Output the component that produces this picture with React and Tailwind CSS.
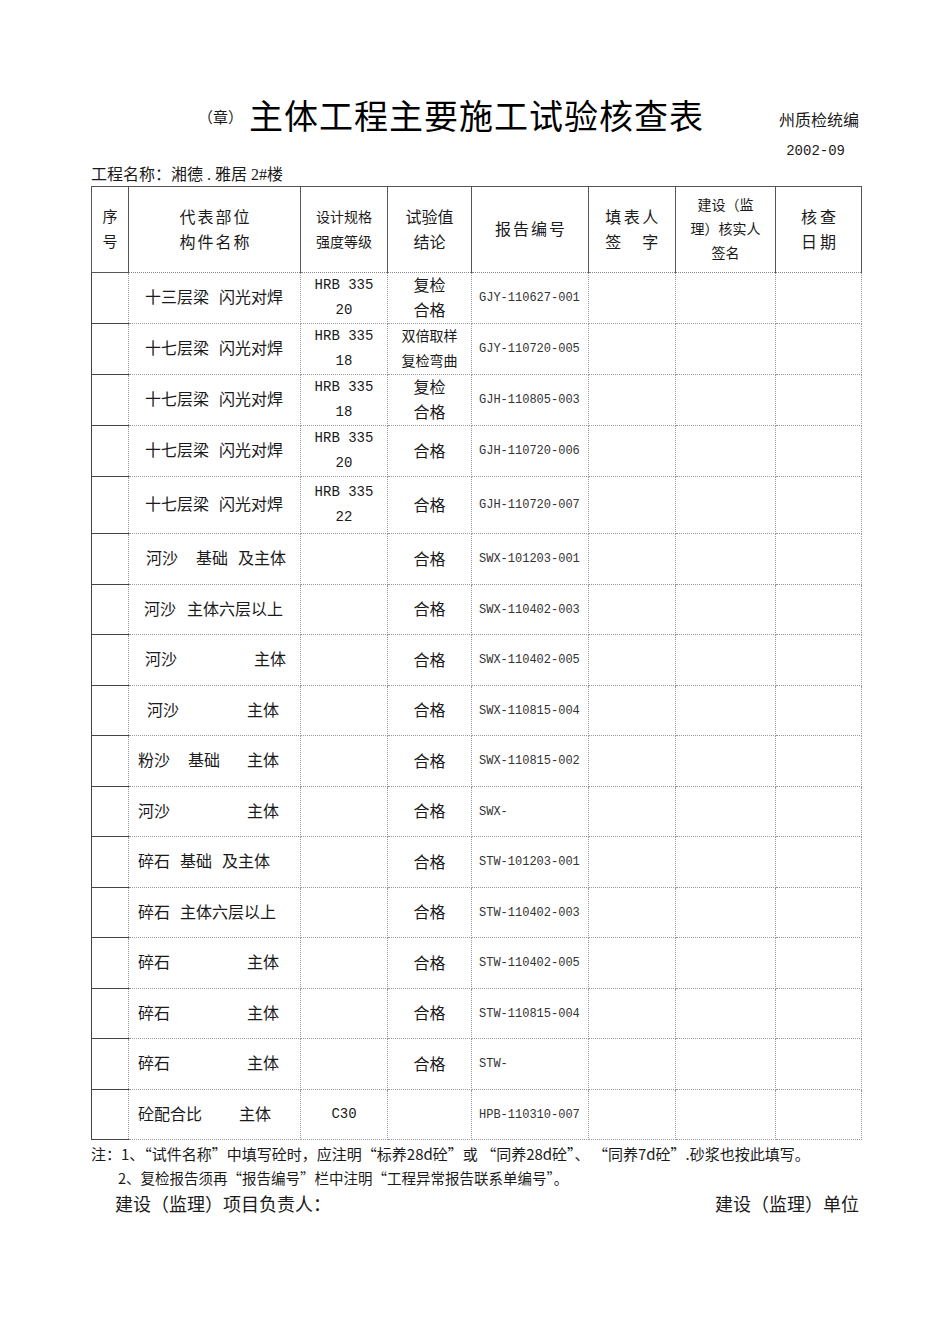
import React from 'react';

// 字体
const CN = "font-['Liberation_Serif','Noto_Sans_CJK_SC',serif]";
const CN_FIRST = "font-['Noto_Sans_CJK_SC','Liberation_Serif',sans-serif]";
const MONO = "font-['Liberation_Mono','Noto_Sans_CJK_SC',monospace]";

// 表格数据
const rows = [
  { h: 'h-[51px]', name: [['十三层梁', 'ml-[16px]'], ['闪光对焊', 'ml-[10px]']], spec: ['HRB 335', '20'], result: ['复检', '合格'], no: 'GJY-110627-001' },
  { h: 'h-[51px]', name: [['十七层梁', 'ml-[16px]'], ['闪光对焊', 'ml-[10px]']], spec: ['HRB 335', '18'], result: ['双倍取样', '复检弯曲'], small: true, no: 'GJY-110720-005' },
  { h: 'h-[51px]', name: [['十七层梁', 'ml-[16px]'], ['闪光对焊', 'ml-[10px]']], spec: ['HRB 335', '18'], result: ['复检', '合格'], no: 'GJH-110805-003' },
  { h: 'h-[51px]', name: [['十七层梁', 'ml-[16px]'], ['闪光对焊', 'ml-[10px]']], spec: ['HRB 335', '20'], result: ['合格'], no: 'GJH-110720-006' },
  { h: 'h-[57px]', name: [['十七层梁', 'ml-[16px]'], ['闪光对焊', 'ml-[10px]']], spec: ['HRB 335', '22'], result: ['合格'], no: 'GJH-110720-007' },
  { h: 'h-[51px]', name: [['河沙', 'ml-[17px]'], ['基础', 'ml-[18px]'], ['及主体', 'ml-[10px]']], spec: [], result: ['合格'], no: 'SWX-101203-001' },
  { h: 'h-[50px]', name: [['河沙', 'ml-[15px]'], ['主体六层以上', 'ml-[11px]']], spec: [], result: ['合格'], no: 'SWX-110402-003' },
  { h: 'h-[51px]', name: [['河沙', 'ml-[16px]'], ['主体', 'ml-[77px]']], spec: [], result: ['合格'], no: 'SWX-110402-005' },
  { h: 'h-[50px]', name: [['河沙', 'ml-[18px]'], ['主体', 'ml-[68px]']], spec: [], result: ['合格'], no: 'SWX-110815-004' },
  { h: 'h-[51px]', name: [['粉沙', 'ml-[9px]'], ['基础', 'ml-[18px]'], ['主体', 'ml-[27px]']], spec: [], result: ['合格'], no: 'SWX-110815-002' },
  { h: 'h-[50px]', name: [['河沙', 'ml-[9px]'], ['主体', 'ml-[77px]']], spec: [], result: ['合格'], no: 'SWX-' },
  { h: 'h-[51px]', name: [['碎石', 'ml-[9px]'], ['基础', 'ml-[10px]'], ['及主体', 'ml-[10px]']], spec: [], result: ['合格'], no: 'STW-101203-001' },
  { h: 'h-[50px]', name: [['碎石', 'ml-[9px]'], ['主体六层以上', 'ml-[10px]']], spec: [], result: ['合格'], no: 'STW-110402-003' },
  { h: 'h-[51px]', name: [['碎石', 'ml-[9px]'], ['主体', 'ml-[77px]']], spec: [], result: ['合格'], no: 'STW-110402-005' },
  { h: 'h-[50px]', name: [['碎石', 'ml-[9px]'], ['主体', 'ml-[77px]']], spec: [], result: ['合格'], no: 'STW-110815-004' },
  { h: 'h-[51px]', name: [['碎石', 'ml-[9px]'], ['主体', 'ml-[77px]']], spec: [], result: ['合格'], no: 'STW-' },
  { h: 'h-[50px]', name: [['砼配合比', 'ml-[9px]'], ['主体', 'ml-[37px]']], spec: ['C30'], result: [], no: 'HPB-110310-007' },
];

const TH = 'p-0 font-normal align-middle text-center border border-solid border-[#555]';
const THB = TH + ' [border-bottom-style:dotted] border-b-[#888]';
const TD = 'p-0 align-middle border border-dotted border-[#999]';

const App = () => {
  return (
    <div className={`min-h-[1344px] w-[950px] bg-white text-[#1a1a1a] ${CN}`}>
      <div className="ml-[91px] w-[770px] pt-[100px]">
        {/* 标题 */}
        <div className="flex items-start">
          <span className="ml-[107px] mt-[8px] text-[15px] leading-[20px]">（章）</span>
          <span className="ml-[6px] text-[34px] leading-[36px] tracking-[1px] text-black">
            主体工程主要施工试验核查表
          </span>
          <span className="ml-auto mr-[2px] mt-[11px] text-[16px] leading-[20px]">州质检统编</span>
        </div>
        <div className={`mt-[6px] pr-[16px] text-right text-[14px] leading-[18px] ${MONO}`}>2002-09</div>
        <div className="mt-[6px] text-[16px] leading-[18px] whitespace-pre">工程名称：湘德 . 雅居 2#楼</div>

        {/* 表格 */}
        <table className="mt-[2px] w-[770px] table-fixed border-collapse">
          <colgroup>
            <col className="w-[37px]" />
            <col className="w-[172px]" />
            <col className="w-[87px]" />
            <col className="w-[84px]" />
            <col className="w-[117px]" />
            <col className="w-[87px]" />
            <col className="w-[100px]" />
            <col className="w-[86px]" />
          </colgroup>
          <thead>
            <tr className="h-[86px]">
              <th className={`${TH} border-[#444] text-[15px] leading-[25px]`}>序<br />号</th>
              <th className={`${THB} text-[16px] leading-[25px] tracking-[2px] pl-[2px]`}>代表部位<br />构件名称</th>
              <th className={`${THB} text-[14px] leading-[25px]`}>设计规格<br />强度等级</th>
              <th className={`${THB} text-[16px] leading-[25px]`}>试验值<br />结论</th>
              <th className={`${THB} text-[16px] leading-[25px] tracking-[2px] pl-[2px]`}>报告编号</th>
              <th className={`${THB} text-[16px] leading-[25px] tracking-[2.5px] pl-[2px]`}>填表人<br />签　字</th>
              <th className={`${THB} text-[14px] leading-[24px]`}>建设（监<br />理）核实人<br />签名</th>
              <th className={`${THB} text-[16px] leading-[25px] tracking-[3px] pl-[3px]`}>核查<br />日期</th>
            </tr>
          </thead>
          <tbody>
            {rows.map((r, i) => (
              <tr key={i} className={r.h}>
                <td className="p-0 border border-solid border-[#444] [border-right-style:dotted] border-r-[#999]"></td>
                <td className={`${TD} text-[16px] leading-[20px] whitespace-nowrap`}>
                  {r.name.map(([t, ml], j) => (
                    <span key={j} className={`inline-block ${ml}`}>{t}</span>
                  ))}
                </td>
                <td className={`${TD} text-center text-[14px] leading-[25px] ${MONO}`}>
                  {r.spec.map((s, j) => (
                    <div key={j} className="whitespace-pre">{s}</div>
                  ))}
                </td>
                <td className={`${TD} text-center ${r.small ? 'text-[14px]' : 'text-[16px]'} leading-[25px]`}>
                  {r.result.map((s, j) => (
                    <div key={j}>{s}</div>
                  ))}
                </td>
                <td className={`${TD} pl-[7px] text-[12px] leading-[16px] text-[#333] ${MONO}`}>{r.no}</td>
                <td className={TD}></td>
                <td className={TD}></td>
                <td className={TD}></td>
              </tr>
            ))}
          </tbody>
        </table>

        {/* 注释 */}
        <div className={`mt-[2px] text-[15px] leading-[24px] whitespace-nowrap ${CN_FIRST}`}>
          注：1、“试件名称”中填写砼时，应注明“标养28d砼”或 “同养28d砼”、 “同养7d砼”.砂浆也按此填写。
        </div>
        <div className={`pl-[27px] text-[14.5px] leading-[24px] whitespace-nowrap ${CN_FIRST}`}>
          2、复检报告须再“报告编号”栏中注明“工程异常报告联系单编号”。
        </div>
        <div className="mt-[3px] flex justify-between pl-[24px] pr-[2px] text-[18px] leading-[24px]">
          <span>建设（监理）项目负责人：</span>
          <span>建设（监理）单位</span>
        </div>
      </div>
    </div>
  );
};

export default App;
